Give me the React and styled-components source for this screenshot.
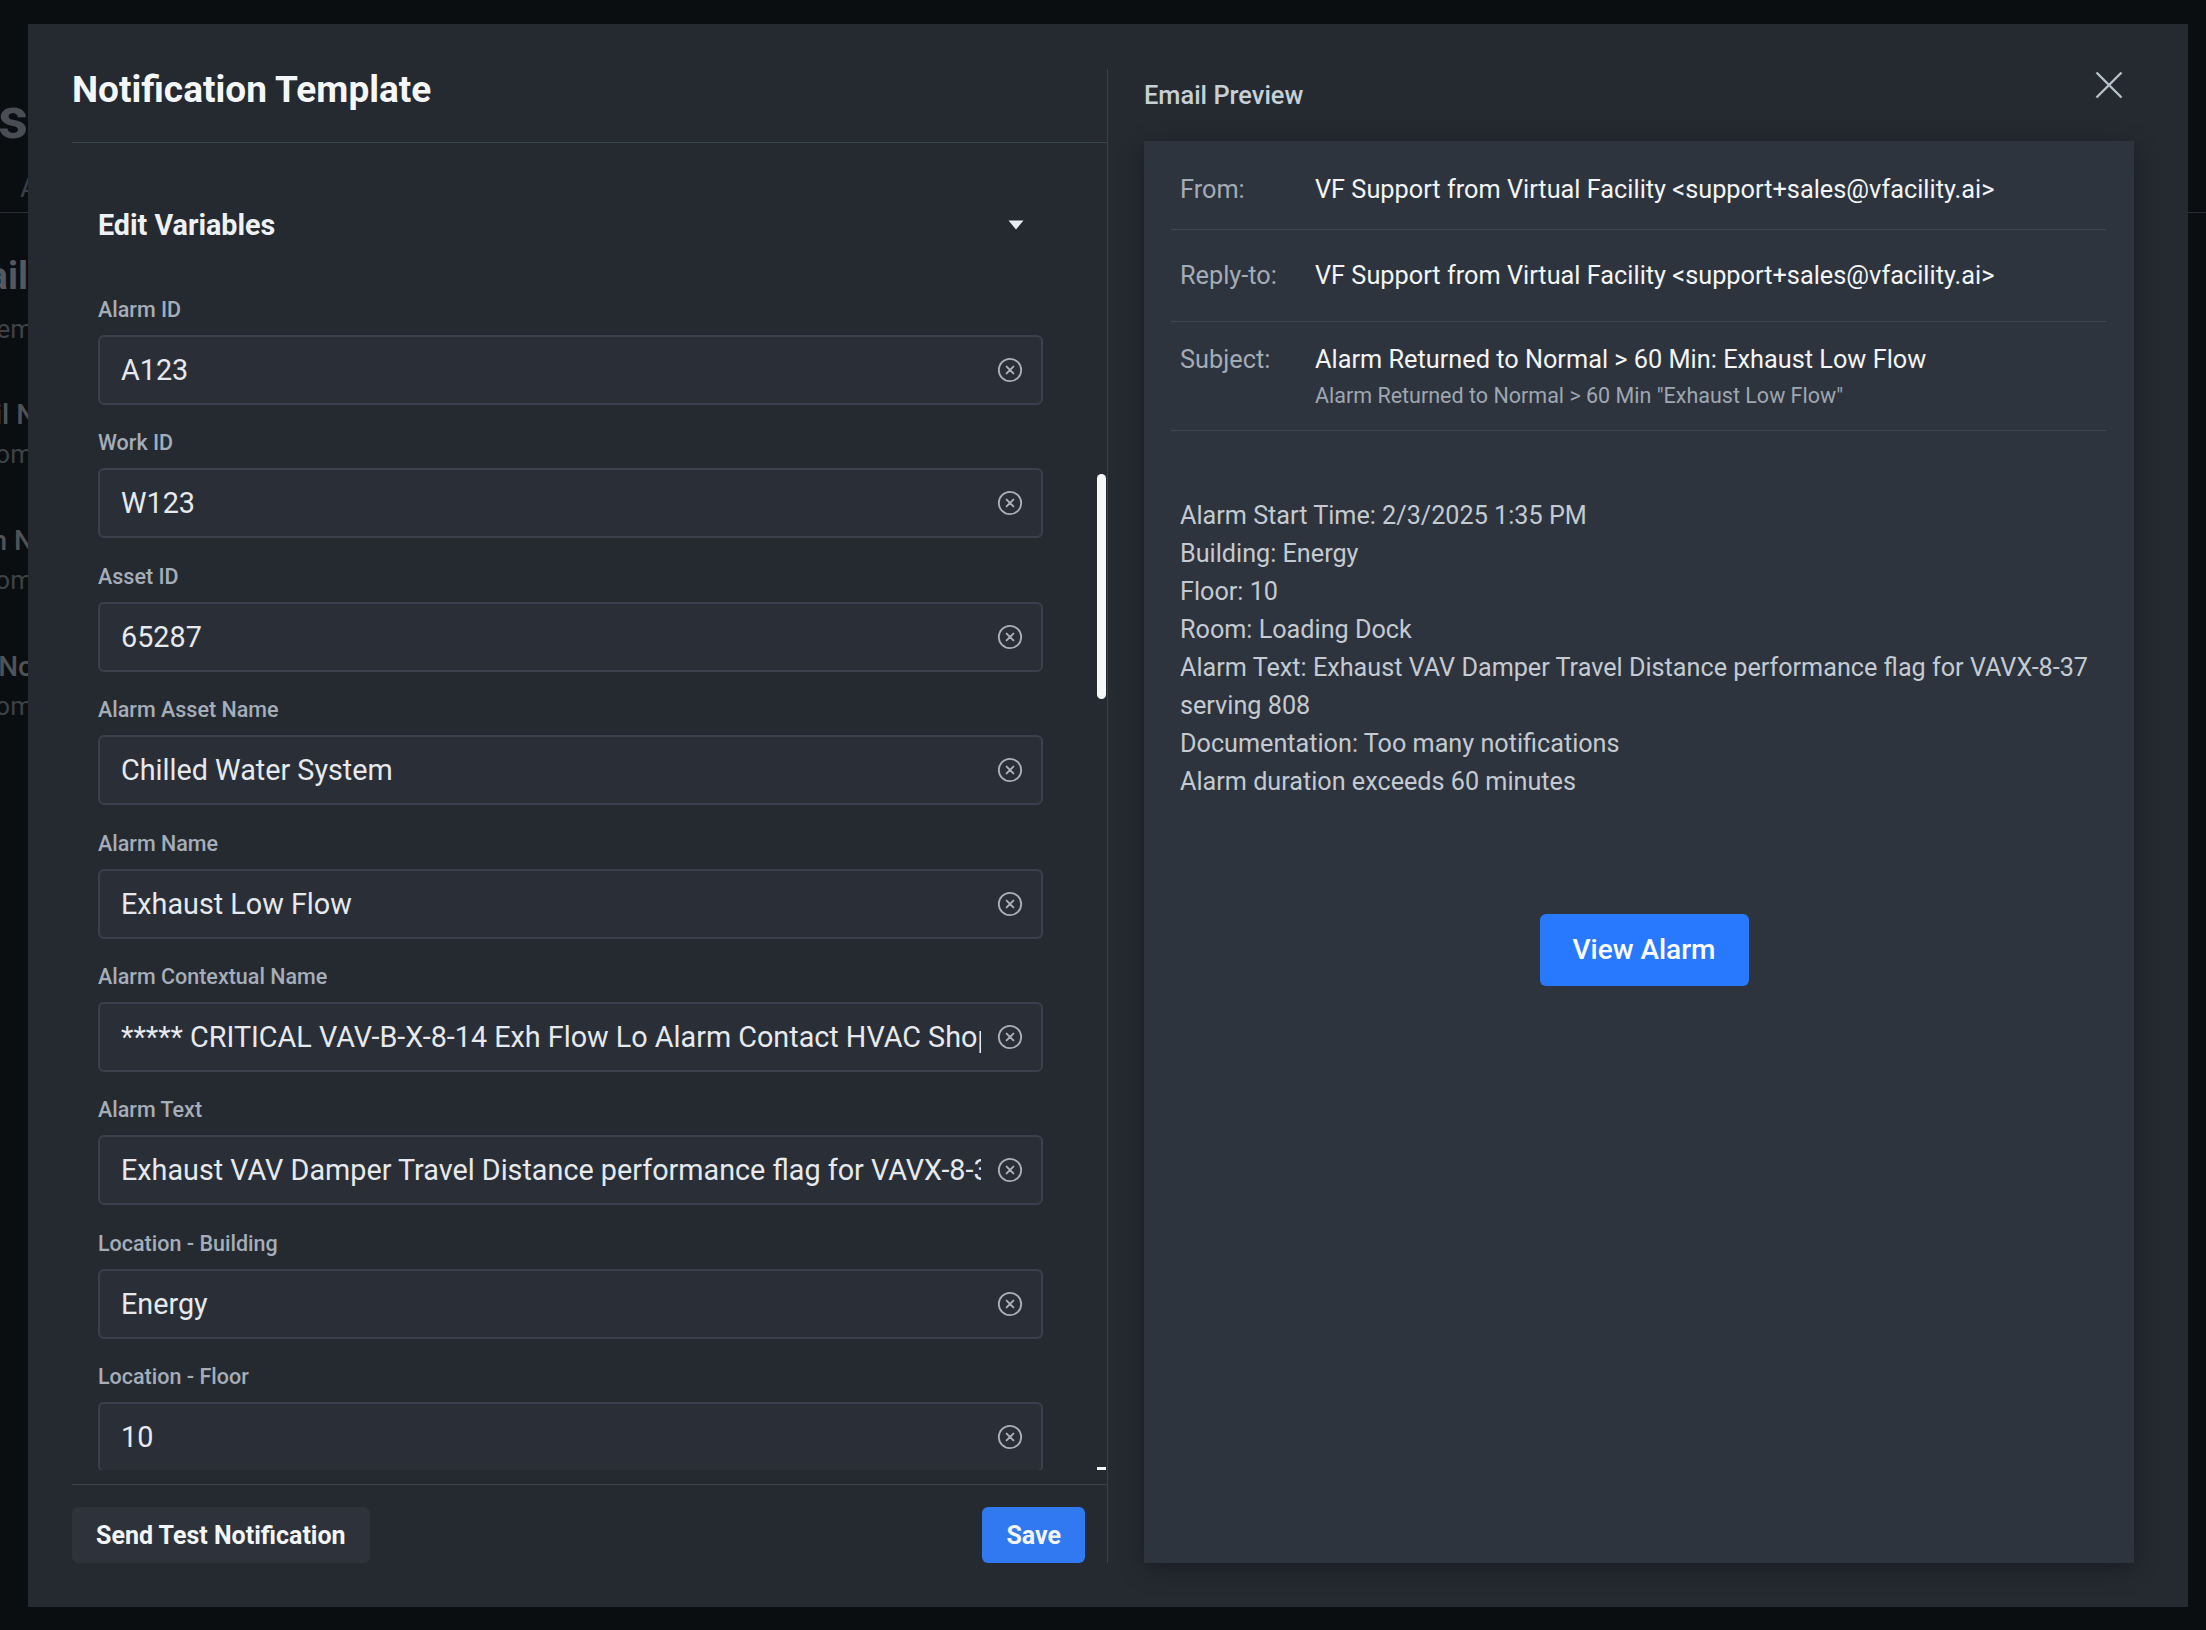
import React from "react";
import styled, { createGlobalStyle } from "styled-components";

const GlobalStyle = createGlobalStyle`
  html, body {
    margin: 0;
    padding: 0;
    background: #0b0e11;
  }
  body {
    font-family: Roboto, "Liberation Sans", sans-serif;
    -webkit-font-smoothing: antialiased;
  }
  * {
    box-sizing: border-box;
  }
`;

const Page = styled.div`
  position: relative;
  width: 2206px;
  height: 1630px;
  overflow: hidden;
  background: #0b0e11;
`;

/* the page sitting behind the dialog, mostly hidden */
const Behind = styled.div`
  display: flex;
  justify-content: space-between;
  height: 100%;
`;

const EdgeStrip = styled.div`
  width: ${(p) => p.$width}px;
  overflow: hidden;
  display: flex;
  flex-direction: column;
  align-items: flex-end;
  padding-top: ${(p) => p.$top}px;
`;

const PageHeading = styled.div`
  font-size: 58px;
  font-weight: 700;
  line-height: 56px;
  color: #4a4e54;
  white-space: nowrap;
`;

const Tabs = styled.div`
  align-self: stretch;
  margin-top: 26px;
  padding: 0 0 8px 20px;
  border-bottom: 1px solid #2a2f35;
  font-size: 28px;
  line-height: 32px;
  color: #3a3f45;
  white-space: nowrap;
  min-height: 41px;
`;

const BehindTitle = styled.div`
  margin-top: ${(p) => p.$gap || 0}px;
  margin-right: ${(p) => -(p.$shift || 0)}px;
  font-size: ${(p) => p.$size}px;
  font-weight: ${(p) => p.$weight || 400};
  line-height: ${(p) => p.$lh}px;
  color: ${(p) => p.$color};
  white-space: nowrap;
`;

const BehindItem = styled.div`
  padding-top: ${(p) => p.$top}px;
  display: flex;
  flex-direction: column;
  align-items: flex-end;
`;

const Modal = styled.div`
  position: absolute;
  top: 24px;
  left: 28px;
  width: 2160px;
  height: 1583px;
  background: #252a31;
  display: flex;
  padding: 45px 54px 44px 44px;
`;

const LeftPane = styled.div`
  width: 1036px;
  flex-shrink: 0;
  display: flex;
  flex-direction: column;
  border-right: 1px solid #36414a;
`;

const DialogTitle = styled.h1`
  margin: 0;
  padding: 2px 0 33px;
  border-bottom: 1px solid #3a4650;
  font-size: 37px;
  font-weight: 700;
  line-height: 38px;
  color: #f4f6f8;
`;

const ScrollWrap = styled.div`
  position: relative;
  flex: 1;
  min-height: 0;
  margin-bottom: 14px;
  overflow: hidden;
`;

const ScrollBody = styled.div`
  height: 100%;
  overflow: hidden;
  padding: 0 64px 0 26px;
`;

const Thumb = styled.div`
  position: absolute;
  right: 1px;
  top: ${(p) => p.$top}px;
  width: 9px;
  height: ${(p) => p.$height}px;
  border-radius: ${(p) => (p.$height > 5 ? 5 : 0)}px;
  background: #f7f7f7;
`;

const SectionHeader = styled.div`
  display: flex;
  justify-content: space-between;
  align-items: center;
  padding: 66px 19px 0 0;
`;

const SectionTitle = styled.h2`
  margin: 0;
  font-size: 28.7px;
  font-weight: 700;
  line-height: 32px;
  color: #eef1f4;
`;

const FieldList = styled.div`
  display: flex;
  flex-direction: column;
  gap: 26.4px;
  margin-top: 57px;
`;

const Field = styled.label`
  display: flex;
  flex-direction: column;
  gap: 13px;
`;

const FieldLabel = styled.span`
  font-size: 21.5px;
  font-weight: 500;
  line-height: 24px;
  color: #a4adb8;
`;

const InputBox = styled.div`
  height: 70px;
  display: flex;
  align-items: center;
  padding: 0 18px 0 21px;
  background: #2a2f37;
  border: 2px solid #3a414c;
  border-radius: 6px;
`;

const TextInput = styled.input`
  flex: 1;
  min-width: 0;
  padding: 0;
  border: 0;
  outline: 0;
  background: transparent;
  font-family: Roboto, "Liberation Sans", sans-serif;
  font-size: 28.75px;
  color: #e6e9ed;
`;

const IconButton = styled.button`
  flex: none;
  display: flex;
  align-items: center;
  justify-content: center;
  width: ${(p) => p.$size}px;
  height: ${(p) => p.$size}px;
  padding: 0;
  border: 0;
  background: none;
  cursor: pointer;
`;

const ClearButton = styled(IconButton)`
  margin-left: 16px;
`;

const CloseButton = styled(IconButton)`
  margin: 2px 11px 0 0;
`;

const Footer = styled.div`
  display: flex;
  justify-content: space-between;
  padding: 22px 22px 0 0;
  border-top: 1px solid #3a4650;
`;

const Button = styled.button`
  height: 56px;
  padding: 0 24px;
  border: 0;
  border-radius: 6px;
  background: ${(p) => (p.$primary ? "#3079f0" : "#2e333b")};
  color: #f3f5f7;
  font-family: Roboto, "Liberation Sans", sans-serif;
  font-size: 25px;
  font-weight: 700;
  cursor: pointer;
`;

const RightPane = styled.div`
  flex: 1;
  min-width: 0;
  padding-left: 36px;
  display: flex;
  flex-direction: column;
`;

const PreviewHeader = styled.div`
  height: 72px;
  display: flex;
  justify-content: space-between;
  align-items: flex-start;
`;

const PreviewTitle = styled.h3`
  margin: 11px 0 0;
  font-size: 25.4px;
  font-weight: 500;
  line-height: 30px;
  color: #c7cfd7;
`;

const Card = styled.div`
  flex: 1;
  padding: 0 28px 0 27px;
  background: #2e343d;
  box-shadow: 0 6px 24px rgba(0, 0, 0, 0.3);
`;

const EmailRow = styled.div`
  display: grid;
  grid-template-columns: 135px 1fr;
  align-content: center;
  min-height: 92px;
  padding: ${(p) => (p.$multi ? "23px 9px 20px" : "22px 9px")};
  border-bottom: 1px solid #3d4752;
  font-size: 25.3px;
  line-height: 30px;

  &:first-child {
    min-height: 89px;
    padding: 27px 9px 17px;
  }
`;

const RowLabel = styled.span`
  color: #a3acb6;
`;

const RowValue = styled.div`
  color: #f2f4f6;
`;

const SubLine = styled.div`
  margin-top: 7px;
  font-size: 21.5px;
  line-height: 28px;
  color: #9ea7b1;
`;

const Body = styled.div`
  padding: 65.5px 9px 0;
  font-size: 25.2px;
  line-height: 38px;
  color: #c3cad2;
`;

const ButtonRow = styled.div`
  display: flex;
  justify-content: center;
  margin-top: 113px;
  padding-left: 11px;
`;

const ViewButton = styled.button`
  width: 209px;
  height: 72px;
  border: 0;
  border-radius: 6px;
  background: #2979ff;
  color: #ffffff;
  font-family: Roboto, "Liberation Sans", sans-serif;
  font-size: 28px;
  font-weight: 500;
`;

const fields = [
  ["Alarm ID", "A123"],
  ["Work ID", "W123"],
  ["Asset ID", "65287"],
  ["Alarm Asset Name", "Chilled Water System"],
  ["Alarm Name", "Exhaust Low Flow"],
  ["Alarm Contextual Name", "***** CRITICAL VAV-B-X-8-14 Exh Flow Lo Alarm Contact HVAC Shop"],
  ["Alarm Text", "Exhaust VAV Damper Travel Distance performance flag for VAVX-8-37 serving 808"],
  ["Location - Building", "Energy"],
  ["Location - Floor", "10"],
  ["Location - Room", "Loading Dock"],
  ["Documentation", "Too many notifications"],
];

const bodyLines = [
  "Alarm Start Time: 2/3/2025 1:35 PM",
  "Building: Energy",
  "Floor: 10",
  "Room: Loading Dock",
  "Alarm Text: Exhaust VAV Damper Travel Distance performance flag for VAVX-8-37 serving 808",
  "Documentation: Too many notifications",
  "Alarm duration exceeds 60 minutes",
];

const behindItems = [
  { title: "Email N", shift: 8, top: 53 },
  { title: "Alarm N", shift: 6, top: 54 },
  { title: "Alert No", shift: 6, top: 54 },
];

function ClearIcon() {
  return (
    <svg width="26" height="26" viewBox="0 0 26 26" fill="none">
      <circle cx="13" cy="13" r="11.2" stroke="#a9b1ba" strokeWidth="1.8" />
      <path d="M9.6 9.6l6.8 6.8M16.4 9.6l-6.8 6.8" stroke="#a9b1ba" strokeWidth="1.9" strokeLinecap="round" />
    </svg>
  );
}

function Caret() {
  return (
    <svg width="16" height="10" viewBox="0 0 16 10">
      <path d="M0.5 0.5h15L8 9.5z" fill="#e8ecf0" />
    </svg>
  );
}

function CloseIcon() {
  return (
    <svg width="28" height="28" viewBox="0 0 28 28" fill="none">
      <path d="M1.5 1.5l25 25M26.5 1.5l-25 25" stroke="#b7c1c9" strokeWidth="2.4" />
    </svg>
  );
}

export default function App() {
  return (
    <Page>
      <GlobalStyle />
      <Behind>
        <EdgeStrip $width={28} $top={90}>
          <PageHeading>Notification Templates</PageHeading>
          <Tabs>All</Tabs>
          <BehindTitle $gap={41} $size={38} $weight={700} $lh={44} $color="#55595f">
            Email
          </BehindTitle>
          <BehindTitle $gap={15} $size={26} $lh={32} $color="#3f4348" $shift={5}>
            System
          </BehindTitle>
          {behindItems.map((item) => (
            <BehindItem key={item.title} $top={item.top}>
              <BehindTitle $size={28} $weight={500} $lh={34} $color="#4f5358" $shift={item.shift}>
                {item.title}
              </BehindTitle>
              <BehindTitle $gap={6} $size={26} $lh={32} $color="#3e4247" $shift={5}>
                From
              </BehindTitle>
            </BehindItem>
          ))}
        </EdgeStrip>
        <EdgeStrip $width={18} $top={90}>
          <PageHeading>&nbsp;</PageHeading>
          <Tabs />
        </EdgeStrip>
      </Behind>

      <Modal>
        <LeftPane>
          <DialogTitle>Notification Template</DialogTitle>
          <ScrollWrap>
            <ScrollBody>
              <SectionHeader>
                <SectionTitle>Edit Variables</SectionTitle>
                <Caret />
              </SectionHeader>
              <FieldList>
                {fields.map(([label, value]) => (
                  <Field key={label}>
                    <FieldLabel>{label}</FieldLabel>
                    <InputBox>
                      <TextInput defaultValue={value} />
                      <ClearButton type="button" $size={26}>
                        <ClearIcon />
                      </ClearButton>
                    </InputBox>
                  </Field>
                ))}
              </FieldList>
            </ScrollBody>
            <Thumb $top={331} $height={225} />
            <Thumb $top={1324} $height={3} />
          </ScrollWrap>
          <Footer>
            <Button type="button">Send Test Notification</Button>
            <Button type="button" $primary>
              Save
            </Button>
          </Footer>
        </LeftPane>

        <RightPane>
          <PreviewHeader>
            <PreviewTitle>Email Preview</PreviewTitle>
            <CloseButton type="button" $size={28}>
              <CloseIcon />
            </CloseButton>
          </PreviewHeader>
          <Card>
            <EmailRow>
              <RowLabel>From:</RowLabel>
              <RowValue>VF Support from Virtual Facility &lt;support+sales@vfacility.ai&gt;</RowValue>
            </EmailRow>
            <EmailRow>
              <RowLabel>Reply-to:</RowLabel>
              <RowValue>VF Support from Virtual Facility &lt;support+sales@vfacility.ai&gt;</RowValue>
            </EmailRow>
            <EmailRow $multi>
              <RowLabel>Subject:</RowLabel>
              <RowValue>
                Alarm Returned to Normal &gt; 60 Min: Exhaust Low Flow
                <SubLine>Alarm Returned to Normal &gt; 60 Min "Exhaust Low Flow"</SubLine>
              </RowValue>
            </EmailRow>
            <Body>
              {bodyLines.map((line) => (
                <div key={line}>{line}</div>
              ))}
              <ButtonRow>
                <ViewButton type="button">View Alarm</ViewButton>
              </ButtonRow>
            </Body>
          </Card>
        </RightPane>
      </Modal>
    </Page>
  );
}
